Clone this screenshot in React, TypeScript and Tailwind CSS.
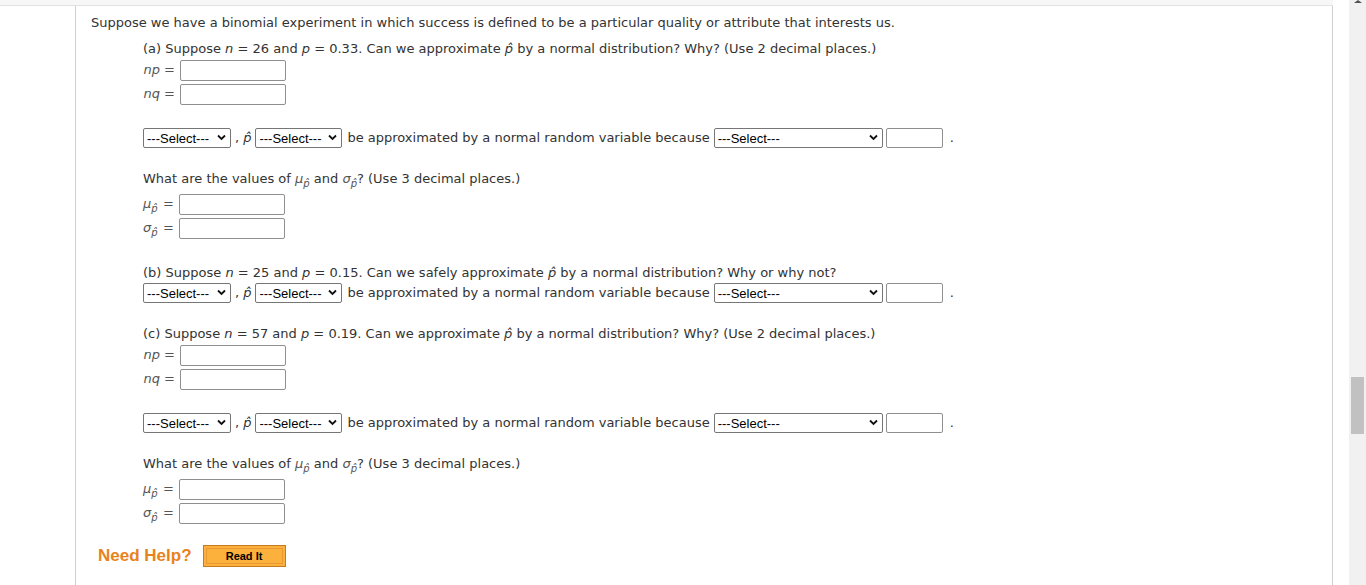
import React from 'react';

const PHat = () => <span className="italic">p&#770;</span>;

const Sub = ({ sym }: { sym: string }) => (
  <span className="italic text-[#555]">
    {sym}
    <sub className="relative top-[4px] text-[10px] not-italic">
      <span className="italic">p&#770;</span>
    </sub>
  </span>
);

const Select = ({ width }: { width: string }) => (
  <span className={`relative inline-flex h-[20px] items-center ${width}`}>
    <select className="h-full w-full appearance-none rounded-[2px] border border-[#767676] bg-white pl-[3px] font-['Liberation_Sans',Arial,sans-serif] text-[13px] text-black">
      <option>---Select---</option>
    </select>
    <svg className="pointer-events-none absolute right-[5px] top-[6px]" width="9" height="7" viewBox="0 0 9 7">
      <path d="M1 1.5 L4.5 5 L8 1.5" fill="none" stroke="#111" strokeWidth="1.8" />
    </svg>
  </span>
);

const Box = ({ width = 'w-[106px]', height = 'h-[21px]' }: { width?: string; height?: string }) => (
  <input className={`${width} ${height} rounded-[2px] border border-[#8f8f8f] bg-white`} />
);

const Field = ({ label }: { label: React.ReactNode }) => (
  <div className="flex h-[24px] items-center">
    <span className="w-[32px] text-right text-[#555]">{label}</span>
    <span className="w-[5px]" />
    <Box />
  </div>
);

const SelectRow = () => (
  <div className="flex h-[20px] items-center whitespace-nowrap">
    <Select width="w-[88px]" />
    <span className="ml-[4px] mr-[4px]">,</span>
    <PHat />
    <span className="w-[4px]" />
    <Select width="w-[87px]" />
    <span className="ml-[5px]">be approximated by a normal random variable because</span>
    <span className="w-[4px]" />
    <Select width="w-[169px]" />
    <span className="w-[3px]" />
    <Box width="w-[57px]" height="h-[20px]" />
    <span className="ml-[7px]">.</span>
  </div>
);

const MomentField = ({ sym }: { sym: string }) => (
  <div className="flex h-[24px] items-center">
    <span className="w-[20px] text-left"><Sub sym={sym} /></span>
    <span className="text-[#555]">=</span>
    <span className="w-[5px]" />
    <Box />
  </div>
);

const Moments = () => (
  <>
    <div className="flex h-[20px] items-center">
      What are the values of&nbsp;<Sub sym="μ" />&nbsp;and&nbsp;<Sub sym="σ" />? (Use 3 decimal places.)
    </div>
    <div className="mt-[3px]">
      <MomentField sym="μ" />
      <MomentField sym="σ" />
    </div>
  </>
);

const NpNq = () => (
  <div className="-mt-[1px]">
    <Field label={<><span className="italic">np</span> =</>} />
    <Field label={<><span className="italic">nq</span> =</>} />
  </div>
);

export default function App() {
  return (
    <div className="flex h-[585px] overflow-hidden bg-white font-['DejaVu_Sans',Verdana,sans-serif] text-[13px] text-[#333]">
      <div className="flex w-[1349px] flex-col">
        <div className="h-[6px] w-[1333px] border-b border-[#e2e2e2] bg-[#f7f7f7]" />
        <div className="ml-[75px] w-[1258px] flex-1 border-x border-[#cfcfcf] pl-[15px]">
          <div className="mt-[7px] flex h-[20px] items-center">
            Suppose we have a binomial experiment in which success is defined to be a particular quality or attribute that interests us.
          </div>
          <div className="ml-[52px]">
            <div className="mt-[6px] flex h-[20px] items-center">
              (a) Suppose&nbsp;<span className="italic">n</span>&nbsp;= 26 and&nbsp;<span className="italic">p</span>&nbsp;= 0.33. Can we approximate&nbsp;<PHat />&nbsp;by a normal distribution? Why? (Use 2 decimal places.)
            </div>
            <NpNq />
            <div className="mt-[22px]">
              <SelectRow />
            </div>
            <div className="mt-[21px]">
              <Moments />
            </div>

            <div className="mt-[23px] flex h-[20px] items-center">
              (b) Suppose&nbsp;<span className="italic">n</span>&nbsp;= 25 and&nbsp;<span className="italic">p</span>&nbsp;= 0.15. Can we safely approximate&nbsp;<PHat />&nbsp;by a normal distribution? Why or why not?
            </div>
            <SelectRow />

            <div className="mt-[21px] flex h-[20px] items-center">
              (c) Suppose&nbsp;<span className="italic">n</span>&nbsp;= 57 and&nbsp;<span className="italic">p</span>&nbsp;= 0.19. Can we approximate&nbsp;<PHat />&nbsp;by a normal distribution? Why? (Use 2 decimal places.)
            </div>
            <NpNq />
            <div className="mt-[22px]">
              <SelectRow />
            </div>
            <div className="mt-[21px]">
              <Moments />
            </div>
          </div>

          <div className="ml-[7px] mt-[20px] flex h-[22px] items-center gap-[11px]">
            <span className="font-['Liberation_Sans',Arial,sans-serif] text-[17px] font-bold text-[#e8831c]">Need Help?</span>
            <button className="flex h-[22px] w-[83px] items-center justify-center border border-[#c67a22] bg-[#fdb13d] p-[2px]">
              <span className="flex h-full w-full items-center justify-center border border-[#e99a32] font-['Liberation_Sans',Arial,sans-serif] text-[11px] font-bold text-black">
                Read It
              </span>
            </button>
          </div>
        </div>
      </div>
      <div className="flex w-[17px] flex-col items-center bg-[#f1f1f1]">
        <div className="h-0 w-0 border-x-[4px] border-b-[3px] border-x-transparent border-b-[#505050]" />
        <div className="mt-[374px] h-[57px] w-[13px] bg-[#c1c1c1]" />
      </div>
    </div>
  );
}
